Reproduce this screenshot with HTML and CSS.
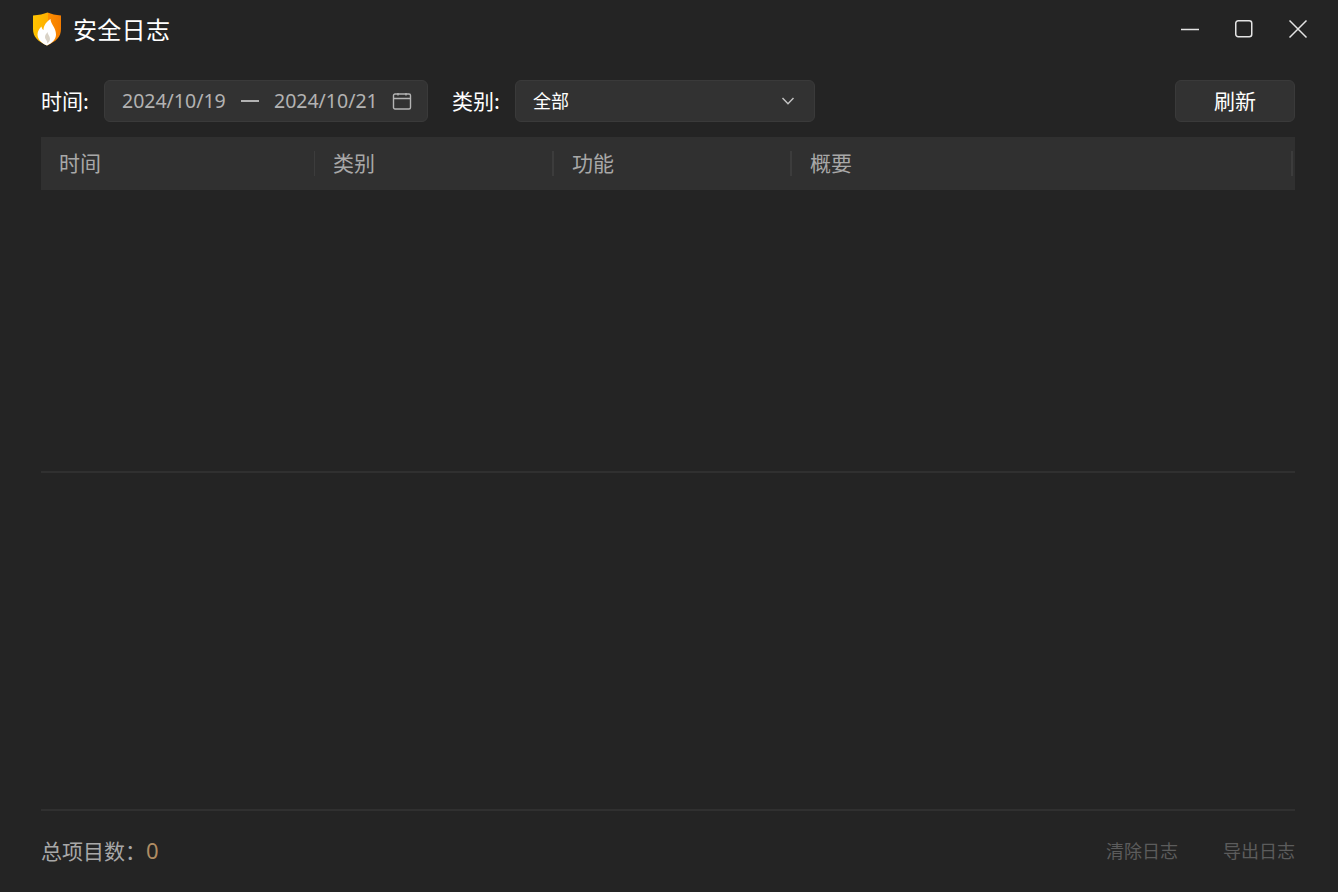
FILE: index.html
```html
<!DOCTYPE html>
<html lang="zh-CN">
<head>
<meta charset="utf-8">
<title>安全日志</title>
<link rel="stylesheet" href="styles.css">
</head>
<body>
<div class="window">
  <header class="titlebar">
    <div class="brand">
      <svg class="logo" width="30" height="34" viewBox="0 0 30 34">
        <defs>
          <linearGradient id="sh" x1="0" y1="0" x2="1" y2="0">
            <stop offset="0" stop-color="#ffc400"/><stop offset="0.55" stop-color="#ffae00"/><stop offset="0.55" stop-color="#ff8f00"/><stop offset="1" stop-color="#f37c00"/>
          </linearGradient>
        </defs>
        <path d="M1 3.500 C7 3 11.500 2 15.500 0.500 C19.500 2 23.500 3 29 3.500 V17 C29 25 24 29.500 15 33.500 C6 29.500 1 25 1 17 Z" fill="url(#sh)"/>
        <path d="M18.500 7 C18.500 12 24 15.500 24 22.500 C24 27.500 20 31 15 33.500 C10 31.500 5.500 27.500 5.500 22.500 C5.500 19 7.500 16.500 9.500 14.500 C9.800 16.500 10.500 17.500 11.500 18 C11.500 13.500 14.500 9.500 18.500 7 Z" fill="#fff"/>
        <path d="M15.500 20 C15.500 22.500 18 24 18 27 C18 29 16.500 30.500 15 31.500 C16 29 13 27.500 13 25 C13 23 14.500 21.500 15.500 20 Z" fill="#d9d2c6"/>
      </svg>
      <h1 class="title">安全日志</h1>
    </div>
    <div class="win-controls">
      <svg class="win-btn" width="20" height="20" viewBox="0 0 20 20"><path d="M1 10.500 H19" stroke="#e4e4e4" stroke-width="1.500" fill="none"/></svg>
      <svg class="win-btn" width="20" height="20" viewBox="0 0 20 20"><rect x="1.750" y="1.750" width="16" height="16" rx="2.500" stroke="#e4e4e4" stroke-width="1.500" fill="none"/></svg>
      <svg class="win-btn" width="20" height="20" viewBox="0 0 20 20"><path d="M1.500 1.500 L18.500 18.500 M18.500 1.500 L1.500 18.500" stroke="#e4e4e4" stroke-width="1.500" fill="none"/></svg>
    </div>
  </header>

  <section class="toolbar">
    <span class="label">时间:</span>
    <div class="field date-field">
      <span class="date">2024/10/19</span>
      <span class="dash"></span>
      <span class="date">2024/10/21</span>
      <svg class="cal" width="20" height="20" viewBox="0 0 20 20"><path d="M3 3 H17 A1.500 1.500 0 0 1 18.500 4.500 V16.500 A1.500 1.500 0 0 1 17 18 H3 A1.500 1.500 0 0 1 1.500 16.500 V4.500 A1.500 1.500 0 0 1 3 3 Z M1.500 7.500 H18.500 M6 2 V4.500 M14 2 V4.500" stroke="#b4b4b4" stroke-width="1.400" fill="none"/></svg>
    </div>
    <span class="label label-cat">类别:</span>
    <div class="field select-field">
      <span class="select-value">全部</span>
      <svg width="14" height="14" viewBox="0 0 14 14"><path d="M1.500 4 L7 9.800 L12.500 4" stroke="#c4c4c4" stroke-width="1.400" fill="none"/></svg>
    </div>
    <button class="refresh">刷新</button>
  </section>

  <section class="table">
    <div class="thead">
      <div class="th th-time">时间</div>
      <div class="th th-cat">类别</div>
      <div class="th th-func">功能</div>
      <div class="th th-sum">概要</div>
    </div>
    <div class="tbody"></div>
    <div class="detail"></div>
  </section>

  <footer class="footer">
    <div class="total">总项目数：<span class="count">0</span></div>
    <div class="actions">
      <span class="action">清除日志</span>
      <span class="action">导出日志</span>
    </div>
  </footer>
</div>
</body>
</html>
```

FILE: styles.css
```css
* { box-sizing: border-box; }
html, body { margin: 0; height: 100%; }
body {
  background: #242424;
  font-family: "Noto Sans CJK SC", "Noto Sans", sans-serif;
  overflow: hidden;
}
.window {
  width: 1338px;
  height: 892px;
  display: flex;
  flex-direction: column;
  padding: 0 43px 0 41px;
}
.titlebar {
  height: 80px;
  flex: none;
  display: flex;
  justify-content: space-between;
  padding-top: 12px;
  margin-left: -9px;
}
.brand { display: flex; align-items: flex-start; gap: 11px; }
.logo { display: block; width: 30px; height: 34px; }
.title {
  margin: -1px 0 0;
  font-size: 24px;
  font-weight: 400;
  line-height: 36px;
  letter-spacing: 0.3px;
  color: #fff;
}
.win-controls { display: flex; gap: 34px; margin-right: -13px; padding-top: 7px; height: 27px; }
.win-btn { display: block; }

.toolbar { height: 42px; flex: none; display: flex; align-items: center; }
.label { font-size: 21px; color: #fff; line-height: 40px; padding-bottom: 2px; width: 63px; flex: none; }
.label-cat { margin-left: 24px; }
.field {
  height: 42px;
  background: #323232;
  border: 1px solid #3a3a3a;
  border-radius: 6px;
  display: flex;
  align-items: center;
}
.date-field { width: 324px; padding: 0 15px 0 17px; }
.date {
  font-family: "Noto Sans", sans-serif;
  font-size: 19.500px;
  color: #b2b2b2;
  width: 104px;
  flex: none;
  padding-bottom: 2px;
}
.dash { width: 18px; height: 2px; background: #b2b2b2; margin: 0 15px; flex: none; }
.cal { margin-left: auto; }
.select-field { width: 300px; padding: 0 19px 0 17px; justify-content: space-between; }
.select-value { font-size: 18px; color: #fff; padding-bottom: 2px; }
.refresh {
  margin-left: auto;
  width: 120px;
  height: 42px;
  background: #323232;
  border: 1px solid #3a3a3a;
  border-radius: 6px;
  color: #fff;
  font: 400 21px "Noto Sans CJK SC", sans-serif;
  padding: 0 0 2px;
}

.table { margin-top: 15px; flex: 1; display: flex; flex-direction: column; min-height: 0; }
.thead { height: 53px; flex: none; background: #303030; display: flex; align-items: center; }
.th {
  height: 25px;
  font-size: 21px;
  line-height: 23px;
  color: #a8a8a8;
  border-right: 2px solid #3c3c3c;
  padding-left: 18px;
  flex: none;
}
.th-time { width: 274px; border-right-width: 1px; }
.th-cat { width: 239px; }
.th-func { width: 238px; }
.th-sum { width: 501px; }
.tbody { height: 283px; flex: none; border-bottom: 2px solid #303030; }
.detail { flex: 1; border-bottom: 2px solid #303030; }

.footer { height: 81px; flex: none; display: flex; justify-content: space-between; align-items: center; padding-bottom: 2px; }
.total { font-size: 21px; color: #a8a8a8; padding-bottom: 2px; }
.count { font-family: "Noto Sans", sans-serif; font-size: 22px; color: #b08d63; }
.actions { display: flex; gap: 45px; padding-bottom: 2px; }
.action { font-size: 18px; color: #5c5c5c; }
```
